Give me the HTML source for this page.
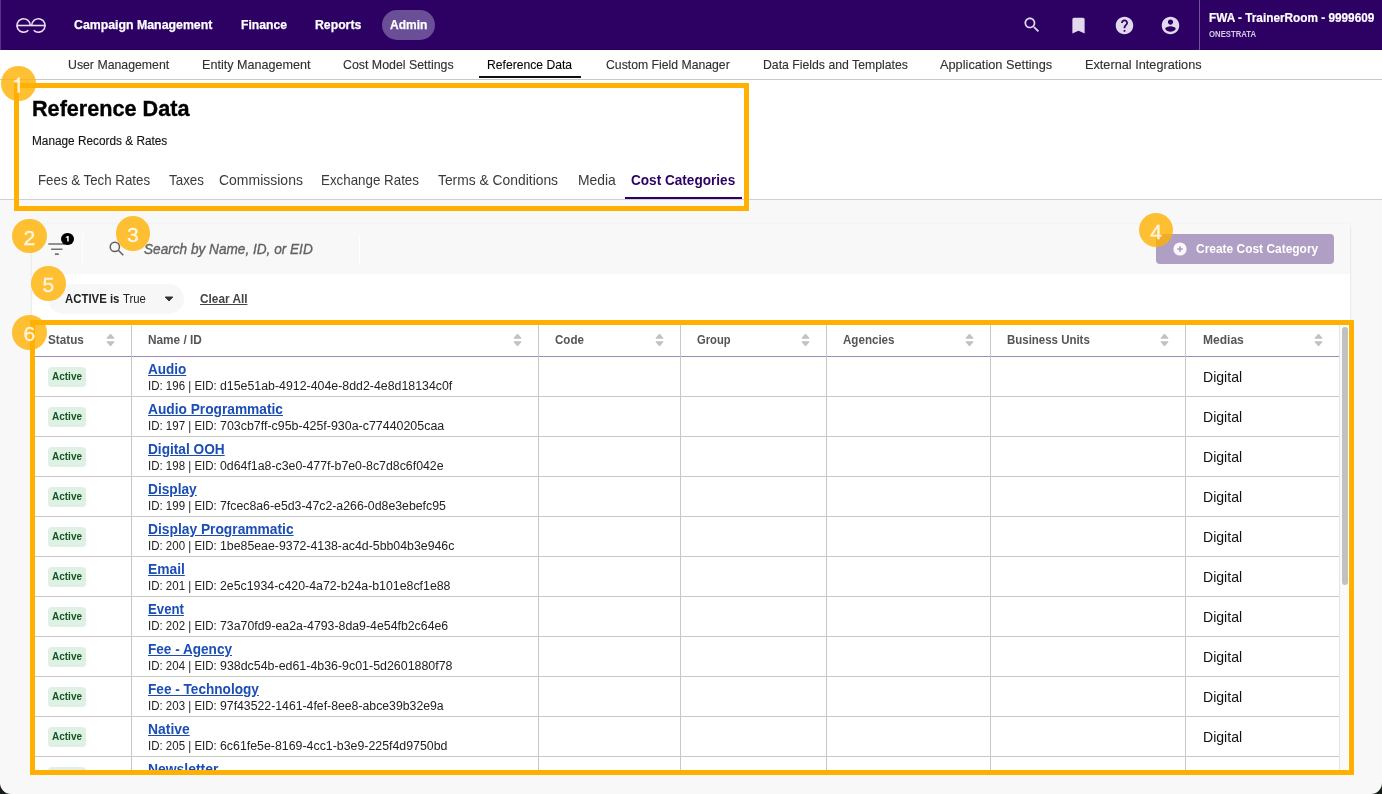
<!DOCTYPE html>
<html lang="en">
<head>
<meta charset="utf-8">
<title>Reference Data - Cost Categories</title>
<style>
*{box-sizing:border-box;margin:0;padding:0}
html,body{width:1382px;height:794px;overflow:hidden;background:#131c17}
body{font-family:"Liberation Sans",sans-serif;position:relative;color:#111}
.abs,.t{position:absolute;white-space:nowrap}
.t{line-height:1;transform:translateY(-50%) scaleX(var(--sx,1));transform-origin:0 50%}
#page{position:absolute;left:0;top:0;width:1382px;height:794px;background:#f8f8f8;border-radius:0 0 11px 11px;overflow:hidden;will-change:transform}
/* top nav */
#nav{position:absolute;left:0;top:0;width:1382px;height:50px;background:#2d0064}
#nav .m{color:#fff;font-weight:700;font-size:13px;-webkit-text-stroke:.25px #fff}
#pill{position:absolute;left:382px;top:10px;width:53px;height:30px;border-radius:15px;background:#6b4f96}
#sep{position:absolute;left:1199px;top:0;width:1px;height:50px;background:#6f5799}
/* sub nav */
#sub{position:absolute;left:0;top:50px;width:1382px;height:30px;background:#fff;border-bottom:1px solid #c9c9c9}
#sub .t{font-size:13px;color:#303030;-webkit-text-stroke:.12px #303030;top:13.800px}
/* header */
#hdr{position:absolute;left:0;top:80px;width:1382px;height:120px;background:#fff;border-bottom:1px solid #d0d0d0}
.tab{font-size:15px;color:#3a3a3a}
/* annotations */
.box{position:absolute;border:5px solid #ffb000;pointer-events:none}
.dot{position:absolute;width:34.600px;height:34.600px;border-radius:50%;background:rgba(255,176,0,.8)}
.dot span{position:absolute;left:0;width:34.600px;top:18.300px;transform:translateY(-50%);text-align:center;line-height:1;font-size:21px;color:rgba(255,255,255,.82);-webkit-text-stroke:.35px rgba(255,255,255,.82)}
/* card */
#card{position:absolute;left:32px;top:224px;width:1318px;height:548px;background:#fff;border-radius:3px;box-shadow:0 1px 3px rgba(0,0,0,.13)}
#tool{position:absolute;left:0;top:0;width:1318px;height:50px;background:#f8f8f8;border-radius:3px 3px 0 0}
#btn{position:absolute;left:1156px;top:234px;width:178px;height:30px;border-radius:4px;background:#b09fc4}
#chip{position:absolute;left:48px;top:284px;width:136px;height:30px;border-radius:15px;background:#f7f7f7}
/* table */
#tbl{position:absolute;left:35px;top:325px;width:1313px;height:445px;overflow:hidden;background:#fff}
.vl{position:absolute;top:0;width:1px;height:445px;background:#c8c8c8}
.hl{position:absolute;left:0;width:1304px;height:1px;background:#c8c8c8}
.th{font-size:12px;font-weight:700;color:#555;top:15px}
.srt{position:absolute;top:8px;width:9px;height:14px}
.bdg{position:absolute;left:13px;width:38px;height:20px;border-radius:4px;background:#dff0e4}
.bdg span{position:absolute;left:0;width:38px;text-align:center;top:10.400px;transform:translateY(-50%);line-height:1;font-size:10px;font-weight:700;color:#14561f}
.lnk{font-size:14px;font-weight:700;color:#1a4db5;text-decoration:underline;left:113px}
.idl{font-size:12px;color:#222;left:113px}
.med{font-size:14.5px;color:#111;left:1167.700px;--sx:.970}
</style>
</head>
<body>
<div id="page">

<!-- ======= TOP NAV ======= -->
<div id="nav">
  <div class="abs" style="left:0;top:0;width:1px;height:50px;background:#553584"></div>
  <svg class="abs" style="left:14px;top:15px" width="36" height="21" viewBox="0 0 36 21" fill="none" stroke="#e8e0f2" stroke-width="1.600">
    <path d="M2.900 10.500H31.100"/>
    <path d="M14.340 15.240A6.700 6.700 0 1 1 16.300 10.500"/>
    <path d="M19.660 15.240A6.700 6.700 0 1 0 17.700 10.500"/>
  </svg>
  <div id="pill"></div>
  <span class="t m" id="n1" style="--sx:0.948;left:73.7px;top:24.100px">Campaign Management</span>
  <span class="t m" id="n2" style="--sx:0.936;left:240.5px;top:24.100px">Finance</span>
  <span class="t m" id="n3" style="--sx:0.942;left:315.2px;top:24.100px">Reports</span>
  <span class="t m" id="n4" style="--sx:0.922;left:389.9px;top:24.100px">Admin</span>
  <!-- icons -->
  <svg class="abs" style="left:1022px;top:15px" width="20" height="20" viewBox="0 0 24 24" fill="#e2d9ef"><path d="M15.5 14h-.79l-.28-.27C15.41 12.59 16 11.11 16 9.5 16 5.91 13.09 3 9.500 3S3 5.910 3 9.500 5.910 16 9.500 16c1.610 0 3.090-.59 4.230-1.570l.27.28v.79l5 4.990L20.490 19l-4.990-5zm-6 0C7.010 14 5 11.990 5 9.500S7.010 5 9.500 5 14 7.010 14 9.500 11.990 14 9.500 14z"/></svg>
  <svg class="abs" style="left:1068px;top:15px" width="21" height="21" viewBox="0 0 24 24" fill="#e2d9ef"><path d="M17 3H7c-1.100 0-2 .9-2 2v16l7-3 7 3V5c0-1.100-.9-2-2-2z"/></svg>
  <svg class="abs" style="left:1114px;top:15px" width="21" height="21" viewBox="0 0 24 24" fill="#e2d9ef"><path d="M12 2C6.480 2 2 6.480 2 12s4.480 10 10 10 10-4.480 10-10S17.520 2 12 2zm1 17h-2v-2h2v2zm2.070-7.750l-.9.92C13.450 12.900 13 13.500 13 15h-2v-.5c0-1.100.45-2.100 1.170-2.830l1.240-1.260c.37-.36.59-.86.59-1.410 0-1.100-.9-2-2-2s-2 .9-2 2H8c0-2.210 1.790-4 4-4s4 1.790 4 4c0 .88-.36 1.680-.93 2.250z"/></svg>
  <svg class="abs" style="left:1160px;top:15px" width="21" height="21" viewBox="0 0 24 24" fill="#e2d9ef"><path d="M12 2C6.480 2 2 6.480 2 12s4.480 10 10 10 10-4.480 10-10S17.520 2 12 2zm0 3c1.660 0 3 1.340 3 3s-1.340 3-3 3-3-1.340-3-3 1.340-3 3-3zm0 14.200c-2.500 0-4.710-1.280-6-3.220.03-1.990 4-3.080 6-3.080 1.990 0 5.970 1.090 6 3.080-1.290 1.940-3.500 3.220-6 3.220z"/></svg>
  <div id="sep"></div>
  <span class="t" id="n5" style="--sx:0.943;left:1208.7px;top:18px;color:#fff;-webkit-text-stroke:.2px #fff;font-weight:700;font-size:12.5px">FWA - TrainerRoom - 9999609</span>
  <span class="t" id="n6" style="--sx:0.902;left:1208.7px;top:34.100px;color:#d6c9e9;font-weight:700;font-size:8.600px">ONESTRATA</span>
</div>

<!-- ======= SUB NAV ======= -->
<div id="sub">
  <span class="t" id="s1" style="--sx:0.946;left:68.2px">User Management</span>
  <span class="t" id="s2" style="--sx:0.969;left:202.0px">Entity Management</span>
  <span class="t" id="s3" style="--sx:0.951;left:343.1px">Cost Model Settings</span>
  <span class="t" id="s4" style="--sx:0.935;left:487.2px;color:#000">Reference Data</span>
  <span class="t" id="s5" style="--sx:0.941;left:605.7px">Custom Field Manager</span>
  <span class="t" id="s6" style="--sx:0.943;left:762.7px">Data Fields and Templates</span>
  <span class="t" id="s7" style="--sx:0.982;left:940.4px">Application Settings</span>
  <span class="t" id="s8" style="--sx:0.978;left:1085.3px">External Integrations</span>
  <div class="abs" style="left:479px;top:26px;width:102px;height:2px;background:#111"></div>
</div>

<!-- ======= PAGE HEADER ======= -->
<div id="hdr">
  <span class="t" id="h1" style="--sx:0.983;left:32.4px;top:28.500px;font-size:22px;font-weight:700;color:#000;-webkit-text-stroke:.35px #000">Reference Data</span>
  <span class="t" id="h2" style="--sx:0.945;left:32.4px;top:61px;font-size:12.5px;color:#111;-webkit-text-stroke:.12px #111">Manage Records &amp; Rates</span>
  <span class="t tab" id="t1" style="--sx:0.886;left:38.2px;top:99.200px">Fees &amp; Tech Rates</span>
  <span class="t tab" id="t2" style="--sx:0.893;left:169.0px;top:99.200px">Taxes</span>
  <span class="t tab" id="t3" style="--sx:0.932;left:219.1px;top:99.200px">Commissions</span>
  <span class="t tab" id="t4" style="--sx:0.890;left:321.0px;top:99.200px">Exchange Rates</span>
  <span class="t tab" id="t5" style="--sx:0.923;left:438.3px;top:99.200px">Terms &amp; Conditions</span>
  <span class="t tab" id="t6" style="--sx:0.925;left:578.4px;top:99.200px">Media</span>
  <span class="t tab" id="t7" style="--sx:0.906;left:631.3px;top:99.200px;font-weight:700;color:#2d0064">Cost Categories</span>
  <div class="abs" style="left:625px;top:116.800px;width:117px;height:2.700px;background:#2d0064"></div>
</div>

<!-- ======= CARD ======= -->
<div id="card"><div id="tool"></div></div>

<!-- ======= TABLE ======= -->
<div id="tbl">
  <span class="t th" id="th0" style="--sx:0.976;left:13.2px">Status</span>
  <svg class="srt" style="left:71.4px" viewBox="0 0 9 14"><path d="M1.200 5.200L4.500 1.500L7.800 5.200ZM1.200 8.800L4.500 12.500L7.800 8.800Z" fill="#c2c2c2" stroke="#c2c2c2" stroke-width="1.200" stroke-linejoin="round"/></svg>
  <span class="t th" id="th1" style="--sx:0.984;left:113.3px">Name / ID</span>
  <svg class="srt" style="left:478.4px" viewBox="0 0 9 14"><path d="M1.200 5.200L4.500 1.500L7.800 5.200ZM1.200 8.800L4.500 12.500L7.800 8.800Z" fill="#c2c2c2" stroke="#c2c2c2" stroke-width="1.200" stroke-linejoin="round"/></svg>
  <span class="t th" id="th2" style="--sx:0.963;left:520.2px">Code</span>
  <svg class="srt" style="left:620.4px" viewBox="0 0 9 14"><path d="M1.200 5.200L4.500 1.500L7.800 5.200ZM1.200 8.800L4.500 12.500L7.800 8.800Z" fill="#c2c2c2" stroke="#c2c2c2" stroke-width="1.200" stroke-linejoin="round"/></svg>
  <span class="t th" id="th3" style="--sx:0.933;left:662.0px">Group</span>
  <svg class="srt" style="left:766.4px" viewBox="0 0 9 14"><path d="M1.200 5.200L4.500 1.500L7.800 5.200ZM1.200 8.800L4.500 12.500L7.800 8.800Z" fill="#c2c2c2" stroke="#c2c2c2" stroke-width="1.200" stroke-linejoin="round"/></svg>
  <span class="t th" id="th4" style="--sx:0.965;left:808.2px">Agencies</span>
  <svg class="srt" style="left:930.4px" viewBox="0 0 9 14"><path d="M1.200 5.200L4.500 1.500L7.800 5.200ZM1.200 8.800L4.500 12.500L7.800 8.800Z" fill="#c2c2c2" stroke="#c2c2c2" stroke-width="1.200" stroke-linejoin="round"/></svg>
  <span class="t th" id="th5" style="--sx:0.955;left:972.3px">Business Units</span>
  <svg class="srt" style="left:1125.4px" viewBox="0 0 9 14"><path d="M1.200 5.200L4.500 1.500L7.800 5.200ZM1.200 8.800L4.500 12.500L7.800 8.800Z" fill="#c2c2c2" stroke="#c2c2c2" stroke-width="1.200" stroke-linejoin="round"/></svg>
  <span class="t th" id="th6" style="--sx:1.003;left:1167.7px">Medias</span>
  <svg class="srt" style="left:1279.4px" viewBox="0 0 9 14"><path d="M1.200 5.200L4.500 1.500L7.800 5.200ZM1.200 8.800L4.500 12.500L7.800 8.800Z" fill="#c2c2c2" stroke="#c2c2c2" stroke-width="1.200" stroke-linejoin="round"/></svg>
  <div class="hl" style="top:31px;background:#9d8abb"></div>
  <div class="bdg" style="top:42px"><span>Active</span></div>
  <span class="t lnk" id="l0" style="--sx:0.966;top:44px">Audio</span>
  <span class="t idl" id="p0" style="--sx:0.957;top:60.5px">ID: 196 | EID:</span>
  <span class="t idl" id="x0" style="--sx:1.030;left:185.3px;top:60.5px">d15e51ab-4912-404e-8dd2-4e8d18134c0f</span>
  <span class="t med" id="m0" style="top:52px">Digital</span>
  <div class="hl" style="top:71px"></div>
  <div class="bdg" style="top:82px"><span>Active</span></div>
  <span class="t lnk" id="l1" style="--sx:0.980;top:84px">Audio Programmatic</span>
  <span class="t idl" id="p1" style="--sx:0.957;top:100.5px">ID: 197 | EID:</span>
  <span class="t idl" id="x1" style="--sx:1.035;left:185.3px;top:100.5px">703cb7ff-c95b-425f-930a-c77440205caa</span>
  <span class="t med" style="top:92px">Digital</span>
  <div class="hl" style="top:111px"></div>
  <div class="bdg" style="top:122px"><span>Active</span></div>
  <span class="t lnk" id="l2" style="--sx:0.976;top:124px">Digital OOH</span>
  <span class="t idl" id="p2" style="--sx:0.957;top:140.5px">ID: 198 | EID:</span>
  <span class="t idl" id="x2" style="--sx:1.028;left:185.3px;top:140.5px">0d64f1a8-c3e0-477f-b7e0-8c7d8c6f042e</span>
  <span class="t med" style="top:132px">Digital</span>
  <div class="hl" style="top:151px"></div>
  <div class="bdg" style="top:162px"><span>Active</span></div>
  <span class="t lnk" id="l3" style="--sx:0.978;top:164px">Display</span>
  <span class="t idl" id="p3" style="--sx:0.957;top:180.5px">ID: 199 | EID:</span>
  <span class="t idl" id="x3" style="--sx:1.026;left:185.3px;top:180.5px">7fcec8a6-e5d3-47c2-a266-0d8e3ebefc95</span>
  <span class="t med" style="top:172px">Digital</span>
  <div class="hl" style="top:191px"></div>
  <div class="bdg" style="top:202px"><span>Active</span></div>
  <span class="t lnk" id="l4" style="--sx:0.985;top:204px">Display Programmatic</span>
  <span class="t idl" id="p4" style="--sx:0.957;top:220.5px">ID: 200 | EID:</span>
  <span class="t idl" id="x4" style="--sx:1.027;left:185.3px;top:220.5px">1be85eae-9372-4138-ac4d-5bb04b3e946c</span>
  <span class="t med" style="top:212px">Digital</span>
  <div class="hl" style="top:231px"></div>
  <div class="bdg" style="top:242px"><span>Active</span></div>
  <span class="t lnk" id="l5" style="--sx:0.985;top:244px">Email</span>
  <span class="t idl" id="p5" style="--sx:0.957;top:260.5px">ID: 201 | EID:</span>
  <span class="t idl" id="x5" style="--sx:1.028;left:185.3px;top:260.5px">2e5c1934-c420-4a72-b24a-b101e8cf1e88</span>
  <span class="t med" style="top:252px">Digital</span>
  <div class="hl" style="top:271px"></div>
  <div class="bdg" style="top:282px"><span>Active</span></div>
  <span class="t lnk" id="l6" style="--sx:0.942;top:284px">Event</span>
  <span class="t idl" id="p6" style="--sx:0.957;top:300.5px">ID: 202 | EID:</span>
  <span class="t idl" id="x6" style="--sx:1.027;left:185.3px;top:300.5px">73a70fd9-ea2a-4793-8da9-4e54fb2c64e6</span>
  <span class="t med" style="top:292px">Digital</span>
  <div class="hl" style="top:311px"></div>
  <div class="bdg" style="top:322px"><span>Active</span></div>
  <span class="t lnk" id="l7" style="--sx:0.970;top:324px">Fee - Agency</span>
  <span class="t idl" id="p7" style="--sx:0.957;top:340.5px">ID: 204 | EID:</span>
  <span class="t idl" id="x7" style="--sx:1.034;left:185.3px;top:340.5px">938dc54b-ed61-4b36-9c01-5d2601880f78</span>
  <span class="t med" style="top:332px">Digital</span>
  <div class="hl" style="top:351px"></div>
  <div class="bdg" style="top:362px"><span>Active</span></div>
  <span class="t lnk" id="l8" style="--sx:0.972;top:364px">Fee - Technology</span>
  <span class="t idl" id="p8" style="--sx:0.957;top:380.5px">ID: 203 | EID:</span>
  <span class="t idl" id="x8" style="--sx:1.022;left:185.3px;top:380.5px">97f43522-1461-4fef-8ee8-abce39b32e9a</span>
  <span class="t med" style="top:372px">Digital</span>
  <div class="hl" style="top:391px"></div>
  <div class="bdg" style="top:402px"><span>Active</span></div>
  <span class="t lnk" id="l9" style="--sx:0.992;top:404px">Native</span>
  <span class="t idl" id="p9" style="--sx:0.957;top:420.5px">ID: 205 | EID:</span>
  <span class="t idl" id="x9" style="--sx:1.030;left:185.3px;top:420.5px">6c61fe5e-8169-4cc1-b3e9-225f4d9750bd</span>
  <span class="t med" style="top:412px">Digital</span>
  <div class="hl" style="top:431px"></div>
  <div class="bdg" style="top:442px"><span>Active</span></div>
  <span class="t lnk" id="l10" style="--sx:0.994;top:444px">Newsletter</span>
  <span class="t idl" id="p10" style="--sx:0.957;top:460.5px">ID: 206 | EID:</span>
  <span class="t idl" id="x10" style="--sx:1.026;left:185.3px;top:460.5px">4b1d6c2e-7a90-4e1f-9c3d-2f8a6b7c5d10</span>
  <span class="t med" style="top:452px">Digital</span>
  <div class="hl" style="top:471px"></div>
  <div class="vl" style="left:96px"></div>
  <div class="vl" style="left:503px"></div>
  <div class="vl" style="left:645px"></div>
  <div class="vl" style="left:791px"></div>
  <div class="vl" style="left:955px"></div>
  <div class="vl" style="left:1150px"></div>
  <div class="vl" style="left:1304px;background:#e4e4e4"></div>
  <div class="abs" style="left:1305px;top:0;width:9px;height:445px;background:#fafafa"></div>
  <div class="abs" style="left:1307px;top:2px;width:6px;height:258px;border-radius:3px;background:#c1c1c1"></div>
</div>

<!-- ======= TOOLBAR ======= -->
<svg class="abs" style="left:46px;top:240px" width="22" height="18" viewBox="0 0 22 18" stroke="#707070" stroke-width="1.600" fill="none">
  <path d="M2.300 4H19.300M5.100 9.200H16.500M8.900 14.100H12.800"/>
</svg>
<div class="abs" style="left:61px;top:232.500px;width:13px;height:12.800px;border-radius:50%;background:#000"></div>
<svg class="abs" style="left:61px;top:232.500px" width="13" height="13" viewBox="0 0 13 13"><path d="M7.700 3V8.400H6.200V4.800H4.700V3.900C5.600 3.800 6.200 3.500 6.500 3Z" fill="#fff"/></svg>
<div class="abs" style="left:82px;top:234px;width:1px;height:30px;background:#fff"></div>
<svg class="abs" style="left:107px;top:239px" width="20" height="20" viewBox="0 0 20 20" fill="none" stroke="#606060" stroke-width="1.500"><circle cx="7.850" cy="7.900" r="4.600"/><path d="M11.300 11.300L16.300 16.300" stroke-width="1.500"/></svg>
<span class="t" id="q1" style="--sx:0.939;left:144.0px;top:249px;font-size:14.500px;font-style:italic;color:#626262;-webkit-text-stroke:.35px #626262">Search by Name, ID, or EID</span>
<div class="abs" style="left:359px;top:234px;width:1px;height:30px;background:#fff"></div>
<div id="btn"></div>
<svg class="abs" style="left:1173px;top:241.700px" width="14" height="14" viewBox="0 0 14 14"><circle cx="7" cy="7" r="6.600" fill="#faf8fc"/><path d="M7 4.200V9.800M4.200 7H9.800" stroke="#b09fc4" stroke-width="1.700"/></svg>
<span class="t" id="b1" style="--sx:0.996;left:1195.8px;top:249px;font-size:12px;font-weight:700;color:#fff">Create Cost Category</span>
<div id="chip"></div>
<span class="t" id="c1" style="--sx:0.948;left:65.1px;top:299px;font-size:12px;font-weight:700;color:#222">ACTIVE is</span>
<span class="t" id="c2" style="--sx:0.945;left:123.2px;top:299px;font-size:12px;color:#222">True</span>
<svg class="abs" style="left:164px;top:296px" width="10" height="6" viewBox="0 0 10 6"><path d="M1.200 1H8.800L5 5Z" fill="#333" stroke="#333" stroke-width="1" stroke-linejoin="round"/></svg>
<span class="t" id="c3" style="--sx:0.984;left:199.6px;top:299px;font-size:12px;font-weight:700;color:#444;text-decoration:underline">Clear All</span>

<!-- ======= ANNOTATIONS ======= -->
<div class="box" style="left:14px;top:83px;width:735px;height:128px"></div>
<div class="box" style="left:30px;top:320px;width:1324px;height:455px"></div>
<div class="dot" style="left:1.100px;top:66px"><svg class="abs" style="left:0;top:0" width="35" height="35" viewBox="0 0 35 35"><path d="M18.900 11.200V26.800H16.400V16.200H12.900V14.400C14.900 14.300 16.400 13.500 17 11.200Z" fill="rgba(255,255,255,.82)"/></svg></div>
<div class="dot" style="left:12.100px;top:218.800px"><span>2</span></div>
<div class="dot" style="left:115.600px;top:216.100px"><span>3</span></div>
<div class="dot" style="left:1138.700px;top:212.600px"><span>4</span></div>
<div class="dot" style="left:31.100px;top:266.100px"><span>5</span></div>
<div class="dot" style="left:12.100px;top:315.100px"><span>6</span></div>

</div>
</body>
</html>
